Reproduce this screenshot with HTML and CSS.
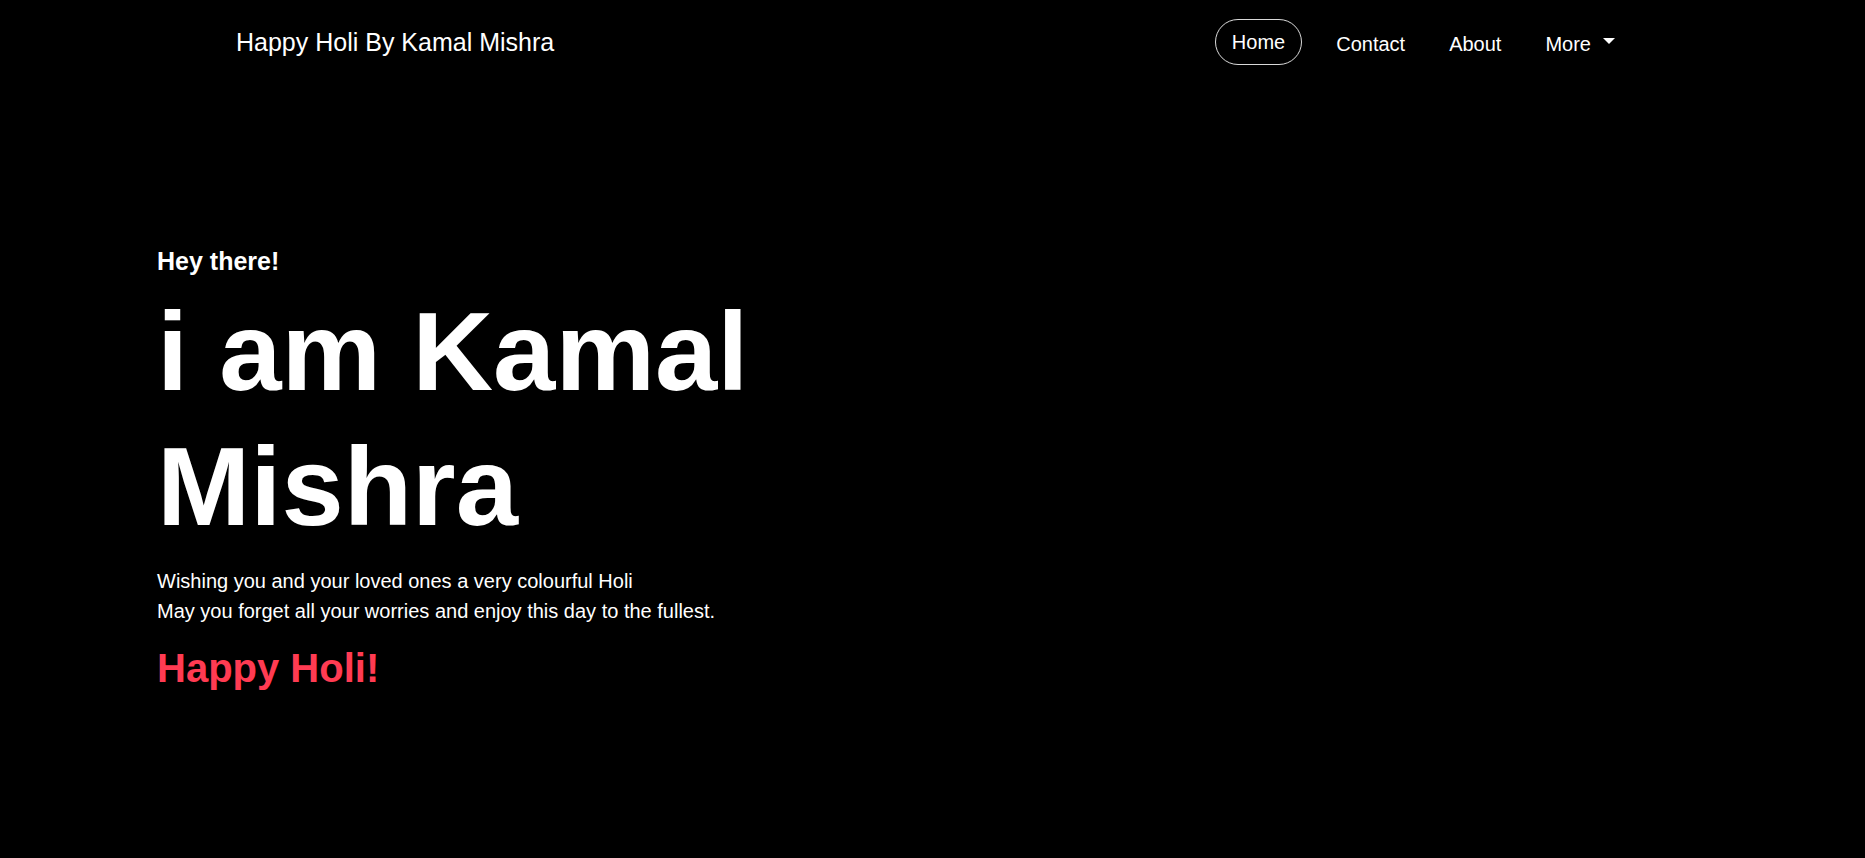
FILE: index.html
```html
<!DOCTYPE html>
<html lang="en">
<head>
<meta charset="utf-8">
<title>Happy Holi By Kamal Mishra</title>
<link rel="stylesheet" href="styles.css">
</head>
<body>
<nav class="navbar">
  <a class="brand" href="#">Happy Holi By Kamal Mishra</a>
  <ul class="nav-links">
    <li><a class="nav-link active" href="#">Home</a></li>
    <li><a class="nav-link" href="#">Contact</a></li>
    <li><a class="nav-link" href="#">About</a></li>
    <li><a class="nav-link dropdown" href="#">More<span class="caret"></span></a></li>
  </ul>
</nav>
<main class="hero">
  <h5 class="greeting">Hey there!</h5>
  <h1 class="title">i am Kamal<br>Mishra</h1>
  <p class="wish">Wishing you and your loved ones a very colourful Holi<br>May you forget all your worries and enjoy this day to the fullest.</p>
  <h2 class="holi">Happy Holi!</h2>
</main>
</body>
</html>
```

FILE: styles.css
```css
* { box-sizing: border-box; }
html, body {
  margin: 0;
  padding: 0;
  background: #000;
  color: #fff;
  font-family: "Liberation Sans", Arial, sans-serif;
}
a { color: #fff; text-decoration: none; }

.navbar {
  display: flex;
  align-items: center;
  height: 84px;
  padding: 0 228px 0 236px;
}
.brand {
  font-size: 25px;
  line-height: 1.2;
}
.nav-links {
  display: flex;
  align-items: center;
  list-style: none;
  margin: 0 0 0 auto;
  padding: 0;
}
.nav-link {
  display: flex;
  align-items: center;
  font-size: 20px;
  line-height: 1.2;
  padding: 3px 22px 0;
}
.nav-link.active {
  height: 46px;
  padding: 0 16px;
  border: 1px solid rgba(255, 255, 255, 0.85);
  border-radius: 23px;
  margin-right: 12px;
}
.caret {
  display: inline-block;
  width: 0;
  height: 0;
  margin-left: 12px;
  margin-top: -6px;
  border-top: 6px solid #fff;
  border-left: 6px solid transparent;
  border-right: 6px solid transparent;
}

.hero {
  padding: 162px 0 0 157px;
}
.greeting {
  margin: 0 0 9.4px;
  font-size: 25px;
  line-height: 1.2;
  font-weight: 700;
}
.title {
  margin: 0 0 12px;
  font-size: 112px;
  line-height: 1.2;
  font-weight: 700;
}
.wish {
  margin: 0 0 18px;
  font-size: 20px;
  line-height: 30px;
}
.holi {
  margin: 0;
  font-size: 40px;
  line-height: 1.2;
  font-weight: 700;
  color: #ff3b52;
}
```
